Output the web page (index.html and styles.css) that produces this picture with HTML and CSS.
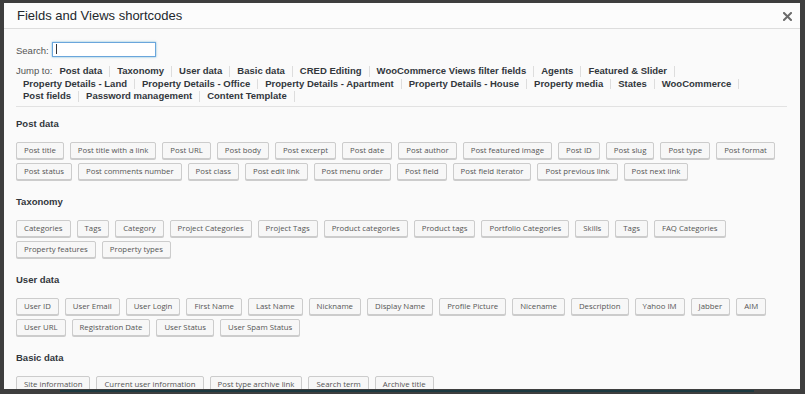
FILE: index.html
```html
<!DOCTYPE html>
<html lang="en">
<head>
    <meta charset="UTF-8"/>
    <meta name="viewport" content="width=device-width, initial-scale=1.0"/>
    <title>Fields and Views shortcodes</title>
    <link rel="stylesheet" href="styles.css">
</head>
<body>
<div class="modal">
    <!-- 标题栏 -->
    <header class="modal-header">
        <h1 class="modal-title">Fields and Views shortcodes</h1>
        <button class="modal-close" aria-label="Close">
            <svg width="9" height="9" viewBox="0 0 9 9">
                <path d="M1 1 L8 8 M8 1 L1 8" stroke="#6b6b6b" stroke-width="2" stroke-linecap="square"/>
            </svg>
        </button>
    </header>

    <div class="modal-body">
        <!-- 搜索 -->
        <div class="search-row">
            <label for="search-input">Search:</label>
            <span class="search-box">
                <input type="text" id="search-input"/>
                <span class="caret"></span>
            </span>
        </div>

        <!-- 跳转链接 -->
        <nav class="jump-list">
            <span class="jump-label">Jump to:</span>
            <a href="#post-data">Post data</a>
            <a href="#taxonomy">Taxonomy</a>
            <a href="#user-data">User data</a>
            <a href="#basic-data">Basic data</a>
            <a href="#">CRED Editing</a>
            <a href="#">WooCommerce Views filter fields</a>
            <a href="#">Agents</a>
            <a href="#">Featured &amp; Slider</a>
            <a href="#">Property Details - Land</a>
            <a href="#">Property Details - Office</a>
            <a href="#">Property Details - Apartment</a>
            <a href="#">Property Details - House</a>
            <a href="#">Property media</a>
            <a href="#">States</a>
            <a href="#">WooCommerce</a>
            <a href="#">Post fields</a>
            <a href="#">Password management</a>
            <a href="#">Content Template</a>
        </nav>

        <!-- 分组 -->
        <div class="groups">
            <section class="group" id="post-data">
                <h2 class="group-title">Post data</h2>
                <div class="btn-list">
                    <button class="sc-btn">Post title</button>
                    <button class="sc-btn">Post title with a link</button>
                    <button class="sc-btn">Post URL</button>
                    <button class="sc-btn">Post body</button>
                    <button class="sc-btn">Post excerpt</button>
                    <button class="sc-btn">Post date</button>
                    <button class="sc-btn">Post author</button>
                    <button class="sc-btn">Post featured image</button>
                    <button class="sc-btn">Post ID</button>
                    <button class="sc-btn">Post slug</button>
                    <button class="sc-btn">Post type</button>
                    <button class="sc-btn">Post format</button>
                    <button class="sc-btn">Post status</button>
                    <button class="sc-btn">Post comments number</button>
                    <button class="sc-btn">Post class</button>
                    <button class="sc-btn">Post edit link</button>
                    <button class="sc-btn">Post menu order</button>
                    <button class="sc-btn">Post field</button>
                    <button class="sc-btn">Post field iterator</button>
                    <button class="sc-btn">Post previous link</button>
                    <button class="sc-btn">Post next link</button>
                </div>
            </section>

            <section class="group" id="taxonomy">
                <h2 class="group-title">Taxonomy</h2>
                <div class="btn-list">
                    <button class="sc-btn">Categories</button>
                    <button class="sc-btn">Tags</button>
                    <button class="sc-btn">Category</button>
                    <button class="sc-btn">Project Categories</button>
                    <button class="sc-btn">Project Tags</button>
                    <button class="sc-btn">Product categories</button>
                    <button class="sc-btn">Product tags</button>
                    <button class="sc-btn">Portfolio Categories</button>
                    <button class="sc-btn">Skills</button>
                    <button class="sc-btn">Tags</button>
                    <button class="sc-btn">FAQ Categories</button>
                    <button class="sc-btn">Property features</button>
                    <button class="sc-btn">Property types</button>
                </div>
            </section>

            <section class="group" id="user-data">
                <h2 class="group-title">User data</h2>
                <div class="btn-list">
                    <button class="sc-btn">User ID</button>
                    <button class="sc-btn">User Email</button>
                    <button class="sc-btn">User Login</button>
                    <button class="sc-btn">First Name</button>
                    <button class="sc-btn">Last Name</button>
                    <button class="sc-btn">Nickname</button>
                    <button class="sc-btn">Display Name</button>
                    <button class="sc-btn">Profile Picture</button>
                    <button class="sc-btn">Nicename</button>
                    <button class="sc-btn">Description</button>
                    <button class="sc-btn">Yahoo IM</button>
                    <button class="sc-btn">Jabber</button>
                    <button class="sc-btn">AIM</button>
                    <button class="sc-btn">User URL</button>
                    <button class="sc-btn">Registration Date</button>
                    <button class="sc-btn">User Status</button>
                    <button class="sc-btn">User Spam Status</button>
                </div>
            </section>

            <section class="group" id="basic-data">
                <h2 class="group-title">Basic data</h2>
                <div class="btn-list">
                    <button class="sc-btn">Site information</button>
                    <button class="sc-btn">Current user information</button>
                    <button class="sc-btn">Post type archive link</button>
                    <button class="sc-btn">Search term</button>
                    <button class="sc-btn">Archive title</button>
                </div>
            </section>
        </div>
    </div>
</div>
<div class="backdrop-strip"></div>
</body>
</html>
```

FILE: styles.css
```css
/* 全局重置 */
* {
    margin: 0;
    padding: 0;
    box-sizing: border-box;
}

body {
    background-color: #3e3e3e;
    font-family: "Liberation Sans", Arial, sans-serif;
    color: #444;
    padding: 3px 5px 0 4px;
    overflow: hidden;
}

/* 弹窗 */
.modal {
    width: 796px;
    height: 386px;
    background-color: #fafafa;
    display: flex;
    flex-direction: column;
    overflow: hidden;
}

.modal-header {
    height: 26px;
    flex: none;
    display: flex;
    align-items: center;
    justify-content: space-between;
    padding: 0 8px 0 13px;
    background-color: #fcfcfc;
    border-bottom: 1px solid #dddddd;
}

.modal-title {
    font-size: 13px;
    font-weight: normal;
    color: #23282d;
    line-height: 25px;
}

.modal-close {
    border: none;
    background: none;
    width: 9px;
    height: 9px;
    display: flex;
    margin-top: 1px;
}

.modal-body {
    padding: 13px 13px 0 12px;
    flex: 1;
    overflow: hidden;
}

/* 搜索框 */
.search-row {
    display: flex;
    align-items: center;
    height: 15px;
    font-size: 9.5px;
    color: #555;
}

.search-row label {
    margin-right: 3px;
    margin-top: 1px;
}

.search-box {
    position: relative;
    display: block;
}

.search-box input {
    display: block;
    width: 104px;
    height: 15px;
    border: 1px solid #6aa6dc;
    box-shadow: 0 0 2px rgba(30, 140, 190, 0.6);
    background-color: #ffffff;
    outline: none;
}

.search-box .caret {
    position: absolute;
    left: 4px;
    top: 2px;
    width: 1px;
    height: 10px;
    background-color: #333;
}

/* 跳转 */
.jump-list {
    display: flex;
    flex-wrap: wrap;
    margin-top: 8px;
    font-size: 9.5px;
    line-height: 12.5px;
    padding-bottom: 3px;
    border-bottom: 1px solid #e2e2e2;
}

.jump-label {
    color: #555;
}

.jump-list a {
    color: #32373c;
    font-weight: bold;
    text-decoration: none;
    padding: 0 7px;
    border-right: 1px solid #dddddd;
    margin: 1px 0;
    line-height: 10.5px;
}

/* 分组 */
.groups {
    display: flex;
    flex-direction: column;
    gap: 16px;
    padding-top: 11.5px;
}

.group-title {
    font-size: 9.5px;
    font-weight: bold;
    color: #32373c;
    line-height: 12px;
    margin-bottom: 12px;
}

.btn-list {
    display: flex;
    flex-wrap: wrap;
    gap: 4px 6px;
}

.sc-btn {
    font-family: "Open Sans", sans-serif;
    font-size: 7.8px;
    color: #555;
    height: 17px;
    line-height: 15px;
    padding: 0 7px;
    background-color: #f7f7f7;
    border: 1px solid #cccccc;
    border-radius: 2px;
    box-shadow: 0 1px 0 #cccccc;
    white-space: nowrap;
}

/* 背景层底部 */
.backdrop-strip {
    margin: 1px 0 0 56px;
    width: 694px;
    height: 2px;
    background-color: #1d3940;
}
```
